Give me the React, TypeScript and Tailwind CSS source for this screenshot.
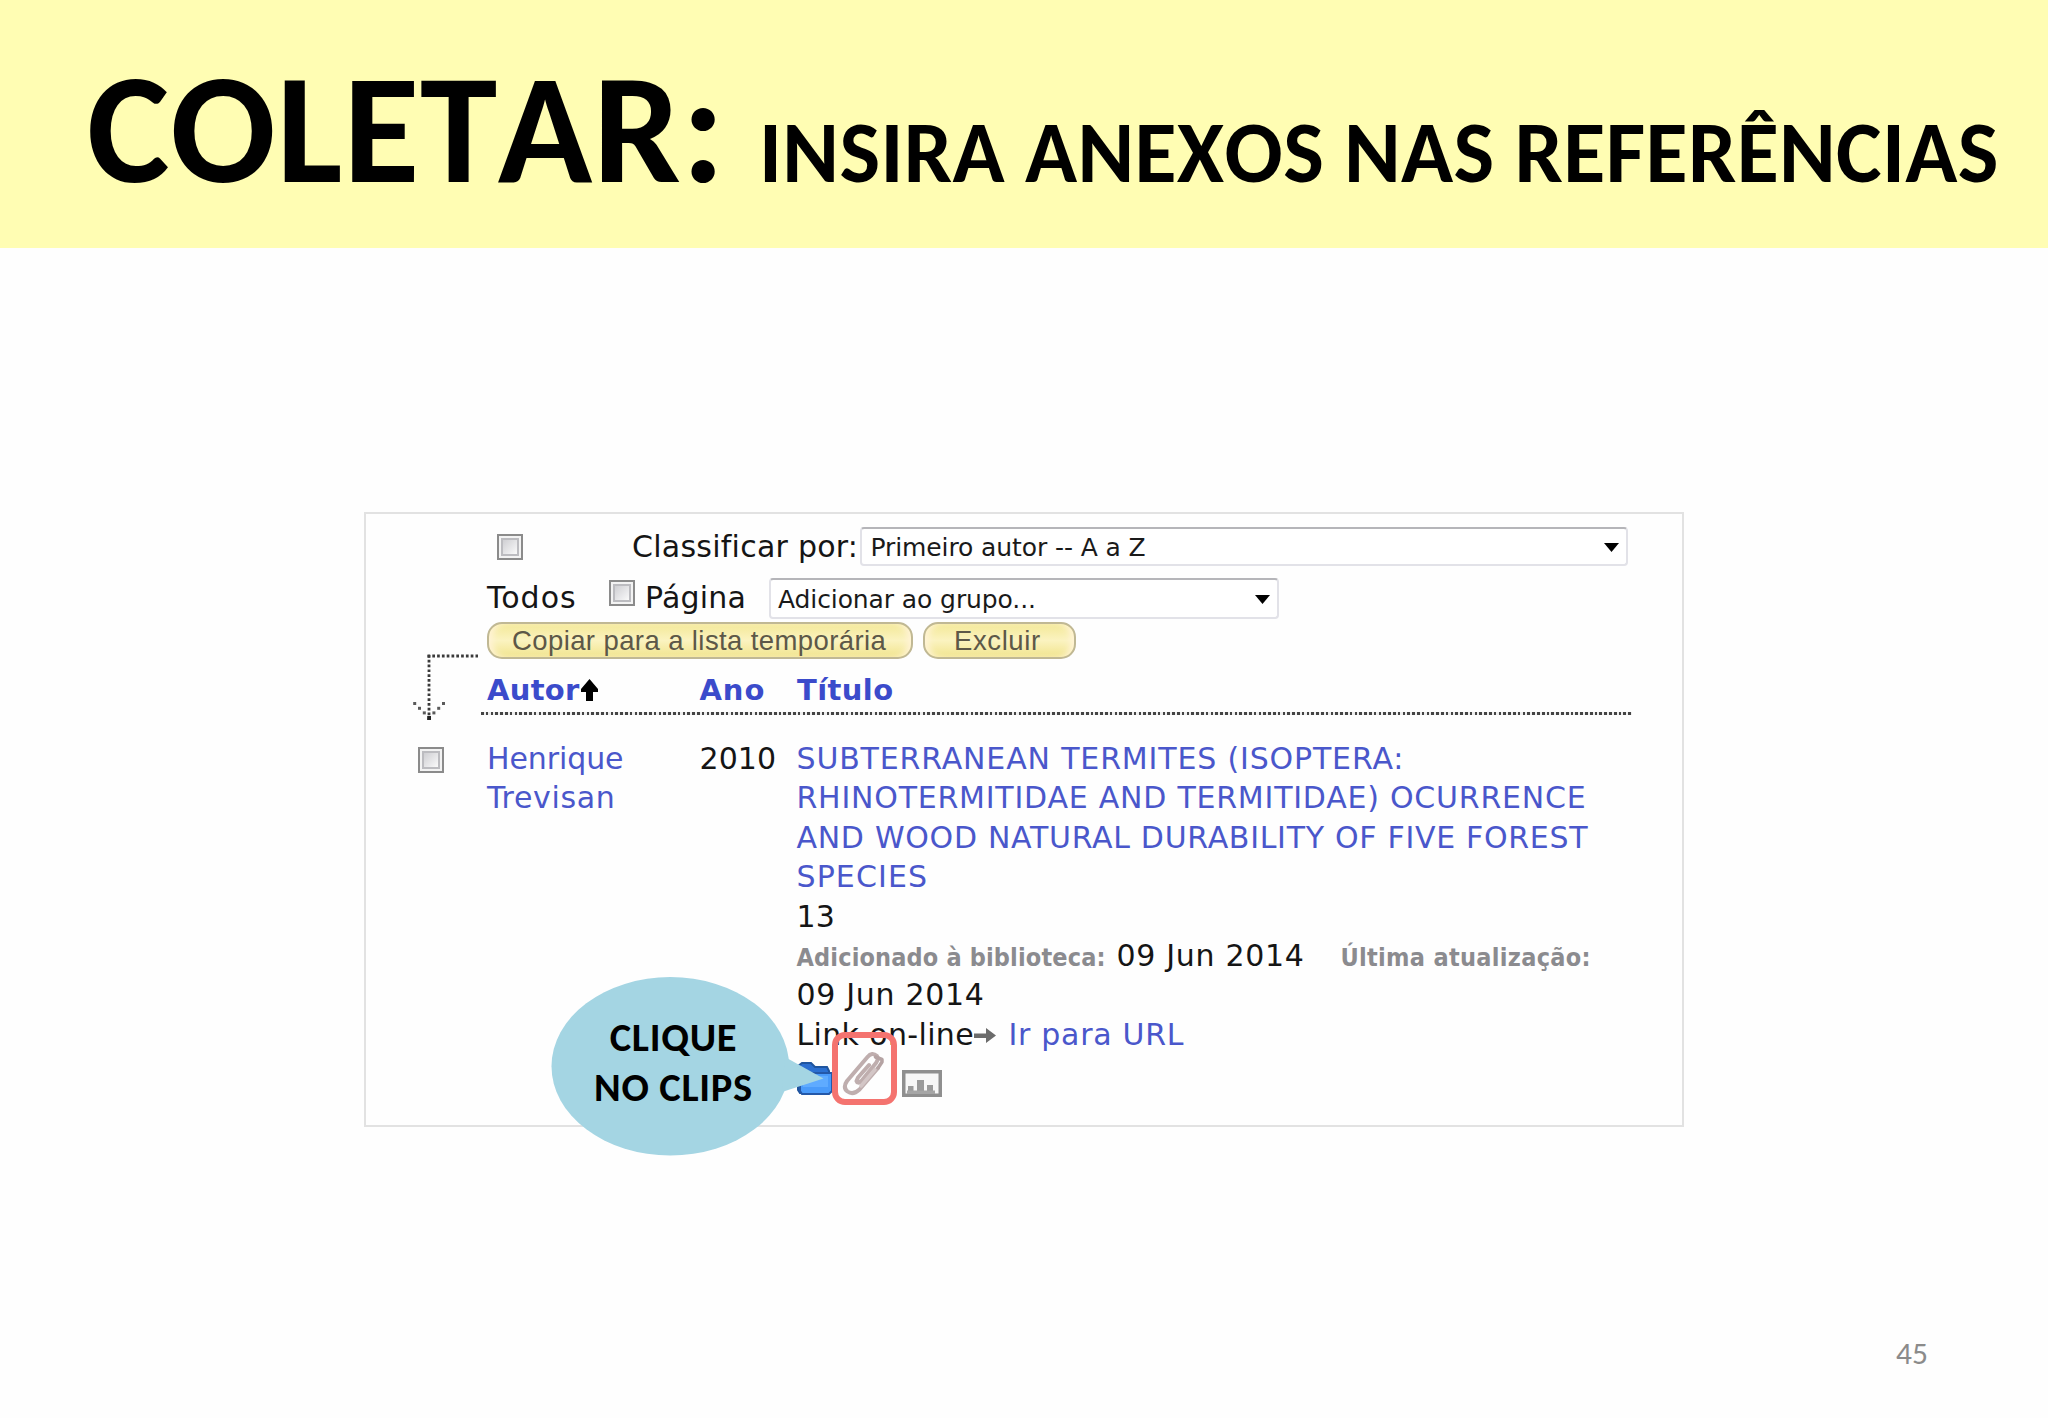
import React from 'react';

function CheckBox({ className }: { className: string }) {
  return (
    <span
      className={`block h-[26px] w-[26px] shrink-0 border-2 border-[#8b8b8b] bg-[#f3f3f3] p-[2px] ${className}`}
    >
      <span className="block h-full w-full border-2 border-[#bcbcc0] bg-linear-to-br from-[#cfcfd3] to-[#fafafa]" />
    </span>
  );
}

function Select({ label, className, labelClass }: { label: string; className: string; labelClass: string }) {
  return (
    <div
      className={`flex shrink-0 items-center justify-between rounded-[4px] border-2 border-[#e2e2e8] border-t-[#b5b5b9] bg-white ${className}`}
    >
      <span className={`pt-px whitespace-nowrap text-[25px] leading-[35px] text-[#1a1a1a] ${labelClass}`}>{label}</span>
      <svg className="mt-[2px] h-[9px] w-[15px]" viewBox="0 0 15 9">
        <path d="M0 0H15L7.5 9Z" fill="#000" />
      </svg>
    </div>
  );
}

function PillButton({ label, className }: { label: string; className: string }) {
  return (
    <button
      className={`h-[37px] rounded-[15px] border-2 border-[#c0b894] bg-linear-to-b from-[#f3e897] via-[#fbf3c0] to-[#f1e48c] text-left font-['Liberation_Sans',Arial,sans-serif] text-[27.5px] leading-[31px] whitespace-nowrap text-[#5d5848] shadow-[inset_7px_0_7px_-3px_#fff3d6,inset_-7px_0_7px_-3px_#fff3d6] ${className}`}
    >
      {label}
    </button>
  );
}

function SelectAllArrow() {
  return (
    <svg className="mt-[139px] ml-[46px] h-[70px] w-[68px]" viewBox="0 0 68 70" fill="none" stroke="#3a3a3a" strokeWidth="2.8">
      <path d="M15.5 3H66" strokeDasharray="2.7 2.1" />
      <path d="M17 2V68" strokeDasharray="2.7 2.1" />
      <g fill="#5a5a5a" stroke="none">
        <rect x="1.2" y="49" width="3" height="3" />
        <rect x="6" y="53.8" width="3" height="3" />
        <rect x="10.8" y="58.4" width="3" height="3" />
        <rect x="20.4" y="58.4" width="3" height="3" />
        <rect x="25.2" y="53.8" width="3" height="3" />
        <rect x="30" y="49" width="3" height="3" />
        <rect x="15.2" y="63" width="3.8" height="4" fill="#222" />
      </g>
    </svg>
  );
}

function FolderIcon() {
  return (
    <svg className="h-[36px] w-[37px]" viewBox="0 0 37 36">
      <path d="M1 5L5 2H14L18 6H30L32 10V30L30 32H3L1 29Z" fill="#2b6fd0" stroke="#1f559f" strokeWidth="2" />
      <path d="M3 12H35V30L32 33H5L3 30Z" fill="#4a9bfa" stroke="#2458a8" strokeWidth="2" />
      <path d="M6 15H31V26H6Z" fill="#5fabff" />
    </svg>
  );
}

function PaperclipIcon() {
  return (
    <svg className="h-[46px] w-[44px]" viewBox="0 0 44 46" fill="none" strokeLinecap="round" strokeLinejoin="round">
      <path
        d="M37 18L18.5 39.5Q12 45.5 6.5 41.5Q1.5 37.5 6 31L26.5 7Q31 1.5 36 6Q38 9 35 13L20 31.5Q16.5 34 15.5 31L17 27.5L28 15"
        stroke="#bfaeae"
        strokeWidth="4"
      />
      <path d="M20 36L34 19.5" stroke="#d3c6c6" strokeWidth="3.5" />
      <path d="M34.5 7L41 9.5V12L37 18" stroke="#b5a3a3" strokeWidth="3.5" />
    </svg>
  );
}

function ChartIcon() {
  return (
    <svg className="h-[27px] w-[40px]" viewBox="0 0 40 27">
      <rect x="1.75" y="1.75" width="36.5" height="23.5" fill="#f7f7f7" stroke="#8f8f8f" strokeWidth="3.5" />
      <path d="M6 24V16H11.5V24ZM15 24V10H22V24ZM25 24V15H31V24Z" fill="#9a9a9a" />
      <path d="M5 20.5H33V24H5Z" fill="#a6a6a6" />
    </svg>
  );
}

function ClickCallout() {
  return (
    <div className="absolute top-[977px] left-[551px] flex h-[179px] w-[273px] flex-col">
      <svg className="absolute inset-0 h-full w-full" viewBox="0 0 273 179">
        <ellipse cx="119.3" cy="89.3" rx="118.8" ry="89.2" fill="#a4d5e3" />
        <path d="M234 80L272.5 101.5L231 115Z" fill="#a4d5e3" />
      </svg>
      <div className="relative mt-[35px] ml-[1px] w-[243px] text-center font-['Carlito','Lato',sans-serif] text-[40.5px] leading-[50px] font-bold tracking-[0.7px] text-black [font-kerning:none]">
        <div>CLIQUE</div>
        <div>NO CLIPS</div>
      </div>
    </div>
  );
}

function ReferencePanel() {
  return (
    <section className="mt-[264px] ml-[364px] h-[615px] w-[1320px] border-2 border-[#e2e2e2] bg-[#fefefe] font-['DejaVu_Sans',Verdana,sans-serif] text-[30px] leading-[39.4px] text-[#151515]">
      <div className="flex h-[201px]">
        <div className="w-[115px] shrink-0">
          <SelectAllArrow />
        </div>
        <div className="flex flex-col pt-[13px]">
          <div className="flex h-[39px] pl-[16px]">
            <CheckBox className="mt-[7px]" />
            <span className="ml-[109px] w-[228px] tracking-[0.25px] whitespace-nowrap">Classificar por:</span>
            <Select label="Primeiro autor -- A a Z" className="h-[39px] w-[768px] pr-[7px] pl-[8.5px]" labelClass="-tracking-[0.1px]" />
          </div>
          <div className="mt-[12px] flex h-[41px] pl-[6px]">
            <span className="w-[122px] tracking-[1px]">Todos</span>
            <CheckBox className="mt-[1.5px]" />
            <span className="ml-[10px] w-[124px] tracking-[0.2px]">Página</span>
            <Select label="Adicionar ao grupo..." className="h-[41px] w-[510px] pr-[7px] pl-[7px]" labelClass="-tracking-[0.1px]" />
          </div>
          <div className="mt-[3px] flex gap-[10px] pl-[6px]">
            <PillButton label="Copiar para a lista temporária" className="w-[426px] pl-[23px] tracking-[0.4px]" />
            <PillButton label="Excluir" className="w-[153px] pl-[29px] tracking-[0.6px]" />
          </div>
          <div className="mt-[13px] flex h-[40px] pl-[6px] text-[29px] leading-[36px] font-bold text-[#3b4bcb]">
            <span className="flex w-[212.5px] tracking-[0.3px]">
              Autor
              <svg className="mt-[7px] ml-[1.5px] h-[22px] w-[17px]" viewBox="0 0 17 22">
                <path d="M8.5 0L17 10V13H12V22H5V13H0V10Z" fill="#000" />
              </svg>
            </span>
            <span className="w-[97.5px] tracking-[0.9px]">Ano</span>
            <span className="tracking-[0.4px]">Título</span>
          </div>
          <div className="h-[2.5px] w-[1151px] shrink-0 bg-[repeating-linear-gradient(90deg,#444_0_2.7px,#eee_2.7px_4.8px)]" />
        </div>
      </div>
      <div className="mt-[24px] flex">
        <CheckBox className="mt-[8px] ml-[52px]" />
        <div className="ml-[43px] w-[212.5px] text-[#4a57cb]">
          <div className="-tracking-[0.1px]">Henrique</div>
          <div className="tracking-[0.65px]">Trevisan</div>
        </div>
        <div className="w-[97px] tracking-[0.1px]">2010</div>
        <div className="whitespace-nowrap">
          <div className="text-[#4a57cb]">
            <div className="tracking-[0.84px]">SUBTERRANEAN TERMITES (ISOPTERA:</div>
            <div className="tracking-[0.77px]">RHINOTERMITIDAE AND TERMITIDAE) OCURRENCE</div>
            <div className="tracking-[0.7px]">AND WOOD NATURAL DURABILITY OF FIVE FOREST</div>
            <div className="tracking-[1.1px]">SPECIES</div>
          </div>
          <div className="tracking-[0.1px]">13</div>
          <div className="flex h-[39.4px] items-baseline">
            <span className="w-[320px] font-['DejaVu_Sans_Condensed',Tahoma,sans-serif] text-[25px] font-bold tracking-[0.15px] text-[#8b8b8f]">
              Adicionado à biblioteca:
            </span>
            <span className="w-[224px] tracking-[0.68px]">09 Jun 2014</span>
            <span className="font-['DejaVu_Sans_Condensed',Tahoma,sans-serif] text-[25px] font-bold tracking-[0.3px] text-[#8b8b8f]">
              Última atualização:
            </span>
          </div>
          <div className="tracking-[0.68px]">09 Jun 2014</div>
          <div className="flex">
            <span className="tracking-[0.35px]">Link on-line</span>
            <svg className="mt-[12px] h-[17px] w-[22px]" viewBox="0 0 22 17">
              <path d="M0 6.5H12V1L22 8.5L12 16V11H0Z" fill="#6b6b6b" />
            </svg>
            <span className="ml-[12.5px] tracking-[0.7px] text-[#4a57cb]">Ir para URL</span>
          </div>
          <div className="flex">
            <div className="mt-[7px]">
              <FolderIcon />
            </div>
            <div className="-mt-[22px] -ml-[2px] flex h-[73px] w-[65px] shrink-0 items-center justify-center rounded-[13px] border-[6.5px] border-[#f4736f] pt-[8px] pr-[2px]">
              <PaperclipIcon />
            </div>
            <div className="mt-[16px] ml-[5.5px]">
              <ChartIcon />
            </div>
          </div>
        </div>
      </div>
    </section>
  );
}

export default function App() {
  return (
    <main className="relative h-[1418px] w-[2048px] overflow-hidden bg-[#fefefe]">
      <header className="flex h-[248px] items-baseline bg-[#fffdb3] pt-[30.5px] pl-[87px] font-['Carlito','Lato',sans-serif] font-bold whitespace-nowrap text-black [font-kerning:none]">
        <h1 className="w-[672px] text-[156px] leading-[196px] tracking-[0.7px]">COLETAR:</h1>
        <span className="text-[86px] tracking-[0.4px]">INSIRA ANEXOS NAS REFERÊNCIAS</span>
      </header>
      <ReferencePanel />
      <ClickCallout />
      <footer className="mt-[206px] pr-[120px] text-right font-['Carlito','Lato',sans-serif] text-[31.5px] leading-[40px] text-[#8b8b8b]">
        45
      </footer>
    </main>
  );
}
